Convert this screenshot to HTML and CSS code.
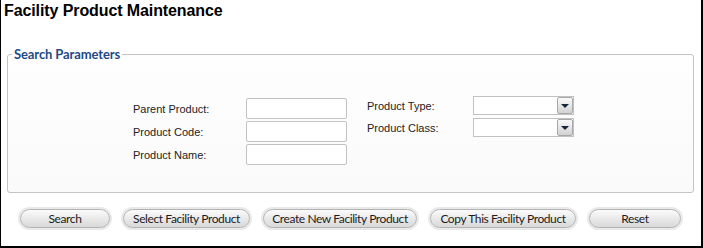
FILE: index.html
```html
<!DOCTYPE html>
<html>
<head>
<meta charset="utf-8">
<title>Facility Product Maintenance</title>
<link rel="stylesheet" href="styles.css">
</head>
<body>
<div class="page">
  <h1 class="title">Facility Product Maintenance</h1>
  <fieldset class="params">
    <legend class="params-legend">Search Parameters</legend>
    <div class="params-body">
      <div class="group group-left">
        <label class="lbl">Parent Product:</label>
        <span class="txt"></span>
        <label class="lbl">Product Code:</label>
        <span class="txt"></span>
        <label class="lbl">Product Name:</label>
        <span class="txt"></span>
      </div>
      <div class="group group-right">
        <label class="lbl">Product Type:</label>
        <span class="sel"><span class="sel-btn"><span class="tri"></span></span></span>
        <label class="lbl">Product Class:</label>
        <span class="sel"><span class="sel-btn"><span class="tri"></span></span></span>
      </div>
    </div>
  </fieldset>
  <div class="actions">
    <button class="btn btn-search">Search</button>
    <button class="btn btn-select">Select Facility Product</button>
    <button class="btn btn-create">Create New Facility Product</button>
    <button class="btn btn-copy">Copy This Facility Product</button>
    <button class="btn btn-reset">Reset</button>
  </div>
</div>
</body>
</html>
```
FILE: styles.css
```css
* { box-sizing: border-box; }
html, body { margin: 0; padding: 0; background: #fff; }
.page {
  width: 703px;
  height: 248px;
  border-left: 1px solid #000;
  border-right: 2px solid #000;
  border-bottom: 2px solid #000;
  font-family: "Liberation Sans", Arial, sans-serif;
  overflow: hidden;
}
.title {
  margin: 0;
  padding: 1px 0 0 3px;
  font-size: 16px;
  line-height: 19px;
  font-weight: bold;
  color: #000;
  letter-spacing: -0.1px;
}
.params {
  margin: 27px 7px 0 6px;
  padding: 0;
  border: 1px solid #c4c4c4;
  border-radius: 3px;
  background: linear-gradient(#fefefe, #fafafa);
  min-inline-size: 0;
}
.params-legend {
  margin-left: 4px;
  padding: 0 2px;
  font-family: Lato, "Liberation Sans", sans-serif;
  font-weight: bold;
  font-size: 13px;
  line-height: 14px;
  color: #1f4b85;
  letter-spacing: -0.1px;
}
.params-body {
  display: flex;
  align-items: flex-start;
  padding: 35px 0 27px 125px;
}
.group {
  display: grid;
  align-items: center;
}
.group-left {
  grid-template-columns: 113px 101px;
  grid-auto-rows: 21px;
  row-gap: 2px;
  margin-top: 2px;
}
.group-right {
  margin-left: 20px;
  grid-template-columns: 106px 101px;
  grid-auto-rows: 19px;
  row-gap: 3px;
}
.lbl {
  font-size: 11px;
  color: #222;
  white-space: nowrap;
}
.txt {
  display: block;
  height: 21px;
  border: 1px solid #c2c2c2;
  border-radius: 2px;
  background: #fff;
}
.sel {
  display: flex;
  justify-content: flex-end;
  height: 19px;
  border: 1px solid #c2c2c2;
  background: #fff;
}
.sel-btn {
  display: flex;
  align-items: center;
  justify-content: center;
  width: 16px;
  height: 17px;
  border: 1px solid #a8a8a8;
  border-radius: 2px;
  background: linear-gradient(#fafafa, #d2d2d2);
}
.tri {
  width: 0;
  height: 0;
  border-left: 4px solid transparent;
  border-right: 4px solid transparent;
  border-top: 4px solid #15253a;
}
.actions {
  display: flex;
  gap: 13px;
  margin: 16px 0 0 19px;
}
.btn {
  height: 19px;
  padding: 0;
  border: 1px solid #b3b3b3;
  border-radius: 10px;
  background: linear-gradient(#fbfbfb, #e6e6e6 60%, #d9d9d9);
  box-shadow: 0 0 0 2px #e9e9e9;
  font-family: Lato, "Liberation Sans", sans-serif;
  font-size: 12px;
  line-height: 17px;
  letter-spacing: -0.4px;
  color: #1c1c1c;
  text-align: center;
  white-space: nowrap;
}
.btn-search { width: 90px; }
.btn-select { width: 127px; }
.btn-create { width: 154px; }
.btn-copy { width: 146px; }
.btn-reset { width: 92px; }
```
